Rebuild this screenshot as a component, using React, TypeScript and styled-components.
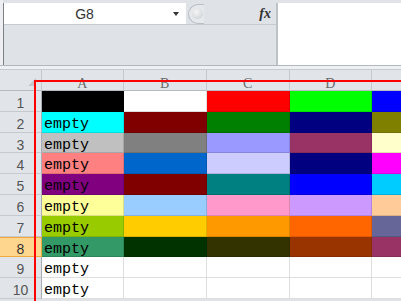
import React from 'react';
import styled, { createGlobalStyle } from 'styled-components';

const GlobalStyle = createGlobalStyle`
  html, body { margin: 0; padding: 0; background: #ffffff; }
  body { font-family: "Liberation Sans", Arial, sans-serif; }
`;

const Window = styled.div`
  position: relative;
  width: 401px;
  height: 301px;
  overflow: hidden;
  background: #dfe3e8;
`;

const FormulaBar = styled.div`
  display: flex;
  height: 65px;
  box-sizing: border-box;
  padding: 3px 0 0 3px;
  background: linear-gradient(to right, #eceef1 3px, #dfe3e8 3px);
`;

const FormulaLeft = styled.div`
  display: flex;
  flex-direction: column;
  width: 272px;
  border-left: 1px solid #7c8188;
`;

const NameRow = styled.div`
  display: flex;
  align-items: stretch;
  height: 22px;
  box-sizing: border-box;
  border-bottom: 1px solid #c6cbd1;
`;

const NameBox = styled.div`
  display: flex;
  align-items: center;
  width: 182px;
  background: #ffffff;
`;

const NameText = styled.span`
  flex: 1;
  text-align: center;
  padding: 1px 8px 0 0;
  font-size: 14px;
  color: #333;
`;

const DropArrow = styled.span`
  width: 0;
  height: 0;
  margin: 1px 7px 0 0;
  border-left: 3.5px solid transparent;
  border-right: 3.5px solid transparent;
  border-top: 4px solid #333;
`;

const GripArea = styled.div`
  display: flex;
  align-items: center;
  flex: 1;
  padding-left: 2px;
`;

const Grip = styled.div`
  display: flex;
  align-items: center;
  width: 16px;
  height: 20px;
  box-sizing: border-box;
  padding-left: 3px;
  border: 1px solid #b9bec4;
  border-right: none;
  border-radius: 10px 0 0 10px;
  background: #e6e9ec;
`;

const Knob = styled.div`
  width: 11px;
  height: 11px;
  border-radius: 50%;
  background: radial-gradient(circle at 40% 35%, #f4f5f6, #c9cdd1);
`;

const Fx = styled.span`
  margin-left: auto;
  margin-right: 5px;
  font-family: "Liberation Serif", "Times New Roman", serif;
  font-style: italic;
  font-weight: bold;
  font-size: 14px;
  color: #333;
`;

const Filler = styled.div`
  flex: 1;
  background: #dfe3e8;
`;

const Separator = styled.div`
  width: 2px;
  background: #bdc2c8;
`;

const FormulaInput = styled.div`
  flex: 1;
  background: #ffffff;
`;

const Divider = styled.div`
  height: 5px;
  box-sizing: border-box;
  border-top: 1px solid #b2b7bd;
  border-bottom: 1px solid #c5cad0;
  background: #eef1f4;
`;

const Sheet = styled.div`
  display: grid;
  grid-template-columns: 42px 81.5px 83.5px 82.5px 82.5px 82.5px;
  grid-template-rows: 21px;
  grid-auto-rows: 20.8px;
`;

const Corner = styled.div`
  position: relative;
  box-sizing: border-box;
  background: #e1e5ea;
  border-right: 1px solid #c5cacf;
  border-bottom: 1px solid #b6bbc1;
  &::after {
    content: '';
    position: absolute;
    right: 5px;
    bottom: 4px;
    width: 0;
    height: 0;
    border-left: 8px solid transparent;
    border-bottom: 8px solid #c3c7cc;
  }
`;

const ColHeader = styled.div`
  box-sizing: border-box;
  background: #e1e5ea;
  border-right: 1px solid #c5cacf;
  border-bottom: 1px solid #b6bbc1;
  text-align: center;
  padding-top: 7px;
  line-height: 14px;
  font-family: "Liberation Serif", "Times New Roman", serif;
  font-size: 14px;
  color: #6a6a6a;
`;

const RowHeader = styled.div<{ $active?: boolean }>`
  box-sizing: border-box;
  background: ${p => (p.$active ? '#ffd68e' : '#e1e5ea')};
  border-right: 1px solid ${p => (p.$active ? '#f2a93b' : '#a7adb3')};
  border-bottom: 1px solid ${p => (p.$active ? '#f2a93b' : '#c5cacf')};
  box-shadow: ${p => (p.$active ? 'inset 0 1px 0 #f2a93b' : 'none')};
  text-align: center;
  padding-top: 5px;
  line-height: 14px;
  font-size: 14px;
  color: ${p => (p.$active ? '#333' : '#555')};
`;

const Cell = styled.div<{ $fill: string }>`
  box-sizing: border-box;
  overflow: hidden;
  background: ${p => p.$fill};
  border-right: 1px solid rgba(0, 0, 0, 0.13);
  border-bottom: 1px solid rgba(0, 0, 0, 0.13);
  padding: 6px 0 0 2px;
  line-height: 14px;
  font-family: "Liberation Mono", "Courier New", monospace;
  font-size: 15px;
  color: #000;
  white-space: nowrap;
`;

const Frame = styled.div`
  position: absolute;
  left: 34px;
  top: 80px;
  right: -20px;
  bottom: -20px;
  border: 2px solid #ff0000;
  pointer-events: none;
`;

// the E header letter falls outside the window, so it is left blank
const columns = ['A', 'B', 'C', 'D', ''];

const rows: { fills: string[]; text: boolean }[] = [
  { fills: ['#000000', '#ffffff', '#ff0000', '#00ff00', '#0000ff'], text: false },
  { fills: ['#00ffff', '#800000', '#008000', '#000080', '#808000'], text: true },
  { fills: ['#c0c0c0', '#808080', '#9999ff', '#993366', '#ffffcc'], text: true },
  { fills: ['#ff8080', '#0066cc', '#ccccff', '#000080', '#ff00ff'], text: true },
  { fills: ['#800080', '#800000', '#008080', '#0000ff', '#00ccff'], text: true },
  { fills: ['#ffff99', '#99ccff', '#ff99cc', '#cc99ff', '#ffcc99'], text: true },
  { fills: ['#99cc00', '#ffcc00', '#ff9900', '#ff6600', '#666699'], text: true },
  { fills: ['#339966', '#003300', '#333300', '#993300', '#993366'], text: true },
  { fills: ['#ffffff', '#ffffff', '#ffffff', '#ffffff', '#ffffff'], text: true },
  { fills: ['#ffffff', '#ffffff', '#ffffff', '#ffffff', '#ffffff'], text: true },
];

const App = () => {
  return (
    <Window>
      <GlobalStyle />
      <FormulaBar>
        <FormulaLeft>
          <NameRow>
            <NameBox>
              <NameText>G8</NameText>
              <DropArrow />
            </NameBox>
            <GripArea>
              <Grip><Knob /></Grip>
              <Fx>fx</Fx>
            </GripArea>
          </NameRow>
          <Filler />
        </FormulaLeft>
        <Separator />
        <FormulaInput />
      </FormulaBar>
      <Divider />
      <Sheet>
        <Corner />
        {columns.map((c, i) => (
          <ColHeader key={i}>{c}</ColHeader>
        ))}
        {rows.map((r, i) => (
          <React.Fragment key={i}>
            <RowHeader $active={i === 7}>{i + 1}</RowHeader>
            {r.fills.map((f, j) => (
              <Cell key={j} $fill={f}>{j === 0 && r.text ? 'empty' : ''}</Cell>
            ))}
          </React.Fragment>
        ))}
      </Sheet>
      <Frame />
    </Window>
  );
};

export default App;
